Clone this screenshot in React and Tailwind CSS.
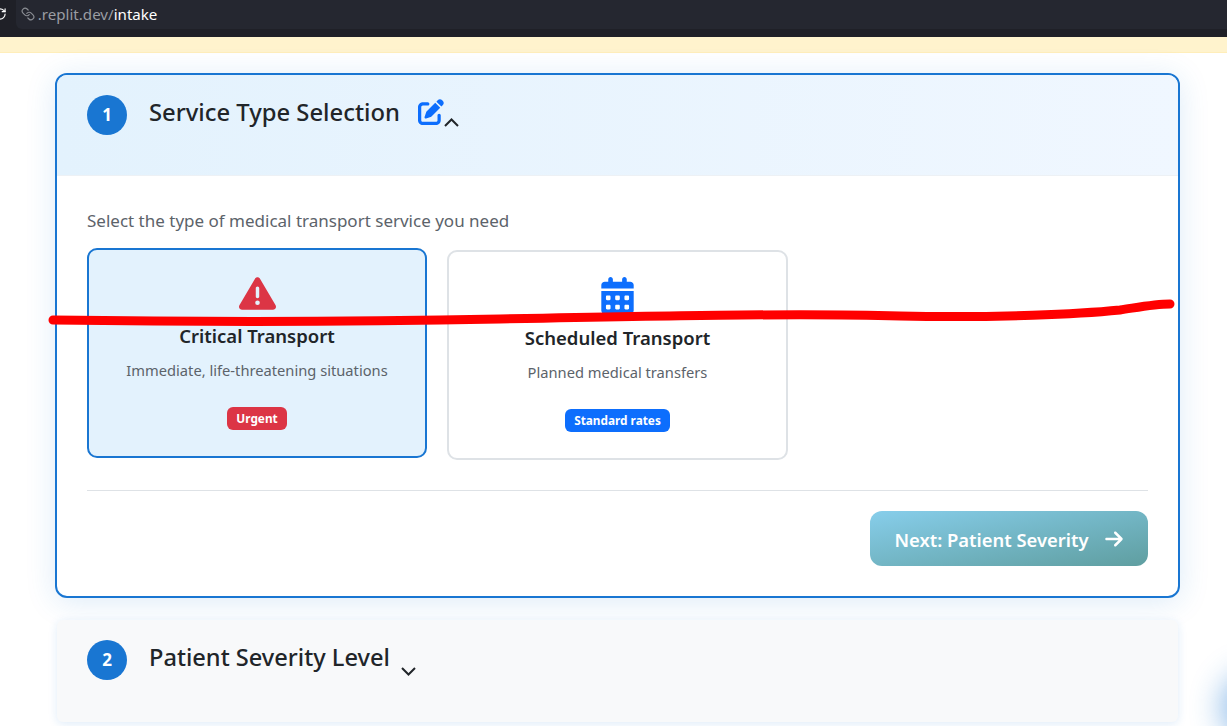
import React from 'react';
import { Link, RotateCw } from 'lucide-react';
import { FaTriangleExclamation, FaCalendarDays, FaPenToSquare, FaArrowRight } from 'react-icons/fa6';

const StepBadge = ({ n }) => (
  <div className="w-10 h-10 rounded-full bg-[#1976d2] text-white flex items-center justify-center text-[17px] font-bold shrink-0">
    {n}
  </div>
);

const ServiceCard = ({ icon, title, text, badge, badgeClass, cardClass }) => (
  <div className={`flex flex-col items-center rounded-[10px] border-2 ${cardClass}`}>
    <div className="mt-[24px] h-[38px] flex items-center justify-center">{icon}</div>
    <h3 className="mt-[10px] text-[18.5px] leading-[27px] font-semibold text-[#212529]">{title}</h3>
    <p className="mt-[10px] text-[14.7px] leading-[22px] text-[#5c636a]">{text}</p>
    <span className={`mt-[26px] px-[9px] h-[23px] flex items-center rounded-md text-[11.8px] font-bold text-white ${badgeClass}`}>
      {badge}
    </span>
  </div>
);

const App = () => {
  return (
    <div className="relative h-[726px] overflow-hidden bg-white font-['Noto_Sans',sans-serif]">
      {/* Browser bar */}
      <div className="h-[37px] bg-[#1f2027] flex items-start">
        <RotateCw className="w-[14px] h-[14px] text-white -ml-[7px] mt-[7px]" />
        <div className="ml-[9px] h-[29px] w-full bg-[#252730] rounded-bl-md flex items-center pl-[5px] pb-[1px]">
          <Link className="w-[14px] h-[14px] text-[#8a8d93] -scale-x-100" />
          <span className="ml-[3px] text-[15.1px] text-[#9a9da3]">
            .replit.dev/<span className="text-white">intake</span>
          </span>
        </div>
      </div>

      {/* Notice strip */}
      <div className="h-[16px] bg-[#fff3cd] border-b border-[#ffeeba]" />

      <div className="px-[55px] pr-[47px] pt-[20px] flex flex-col">
        {/* Step 1 */}
        <div className="h-[525px] rounded-xl border-2 border-[#1976d2] bg-white overflow-hidden shadow-[0_4px_30px_rgba(25,118,210,0.15)]">
          <div className="h-[101px] bg-gradient-to-r from-[#e3f2fd] to-[#f0f7ff] border-b border-[#edf1f5] pl-[30px] pt-[20px] flex items-start">
            <StepBadge n="1" />
            <h2 className="ml-[22px] mt-[-1px] text-[23.8px] leading-[36px] font-medium text-[#212529]">Service Type Selection</h2>
            <FaPenToSquare className="ml-[18px] mt-[4px] w-[26px] h-[26px] text-[#0d6efd]" />
            <svg className="mt-[23px] shrink-0" width="15" height="9" viewBox="0 0 15 9" fill="none" stroke="#212529" strokeWidth="2">
              <path d="M1 8 L7.5 1.5 L14 8" />
            </svg>
          </div>

          <div className="pl-[30px] pr-[30px] pt-[33px]">
            <p className="text-[17px] leading-[24px] text-[#5c636a]">Select the type of medical transport service you need</p>

            <div className="mt-[15px] flex items-start gap-[20px]">
              <ServiceCard
                icon={<FaTriangleExclamation className="w-[37px] h-[37px] text-[#dc3545]" />}
                title="Critical Transport"
                text="Immediate, life-threatening situations"
                badge="Urgent"
                badgeClass="bg-[#dc3545]"
                cardClass="w-[340px] h-[210px] border-[#1976d2] bg-[#e3f2fd]"
              />
              <div className="mt-[2px]">
                <ServiceCard
                  icon={<FaCalendarDays className="w-[33px] h-[37px] text-[#0d6efd]" />}
                  title="Scheduled Transport"
                  text="Planned medical transfers"
                  badge="Standard rates"
                  badgeClass="bg-[#0d6efd]"
                  cardClass="w-[341px] h-[210px] border-[#dee2e6] bg-white"
                />
              </div>
            </div>

            <div className="mt-[30px] border-t border-[#dee2e6] pt-[20px] flex justify-end">
              <button className="w-[278px] h-[55px] pt-[3px] rounded-xl bg-gradient-to-br from-[#87ceeb] to-[#5f9ea0] text-white text-[18.4px] font-semibold flex items-center justify-center gap-[15px]">
                Next: Patient Severity
                <FaArrowRight className="w-[20px] h-[20px] -mt-[3px]" />
              </button>
            </div>
          </div>
        </div>

        {/* Step 2 */}
        <div className="mt-[22px] mx-[2px] h-[102px] rounded-md bg-[#f8f9fa] pl-[30px] pt-[20px] flex items-start shadow-[0_2px_10px_rgba(25,118,210,0.14)]">
          <StepBadge n="2" />
          <h2 className="ml-[22px] mt-[-1px] text-[23.6px] leading-[36px] font-medium text-[#212529]">Patient Severity Level</h2>
          <svg className="ml-[11px] mt-[27px] shrink-0" width="15" height="9" viewBox="0 0 15 9" fill="none" stroke="#212529" strokeWidth="2">
            <path d="M1 1 L7.5 7.5 L14 1" />
          </svg>
        </div>
      </div>

      {/* Scribble over the page */}
      <svg className="absolute left-0 top-0 pointer-events-none" width="1227" height="726">
        <path
          d="M53 320 C200 322 350 322 500 319 C650 316 800 313 900 316 C1000 318 1080 314 1120 310 C1140 307 1155 304 1170 304"
          fill="none"
          stroke="#ff0000"
          strokeWidth="9"
          strokeLinecap="round"
        />
      </svg>

      {/* Floating button glow, cut off by the window */}
      <div className="absolute left-[1222px] top-[672px] w-[70px] h-[70px] rounded-full bg-[#1976d2] blur-lg opacity-50" />
    </div>
  );
};

export default App;
